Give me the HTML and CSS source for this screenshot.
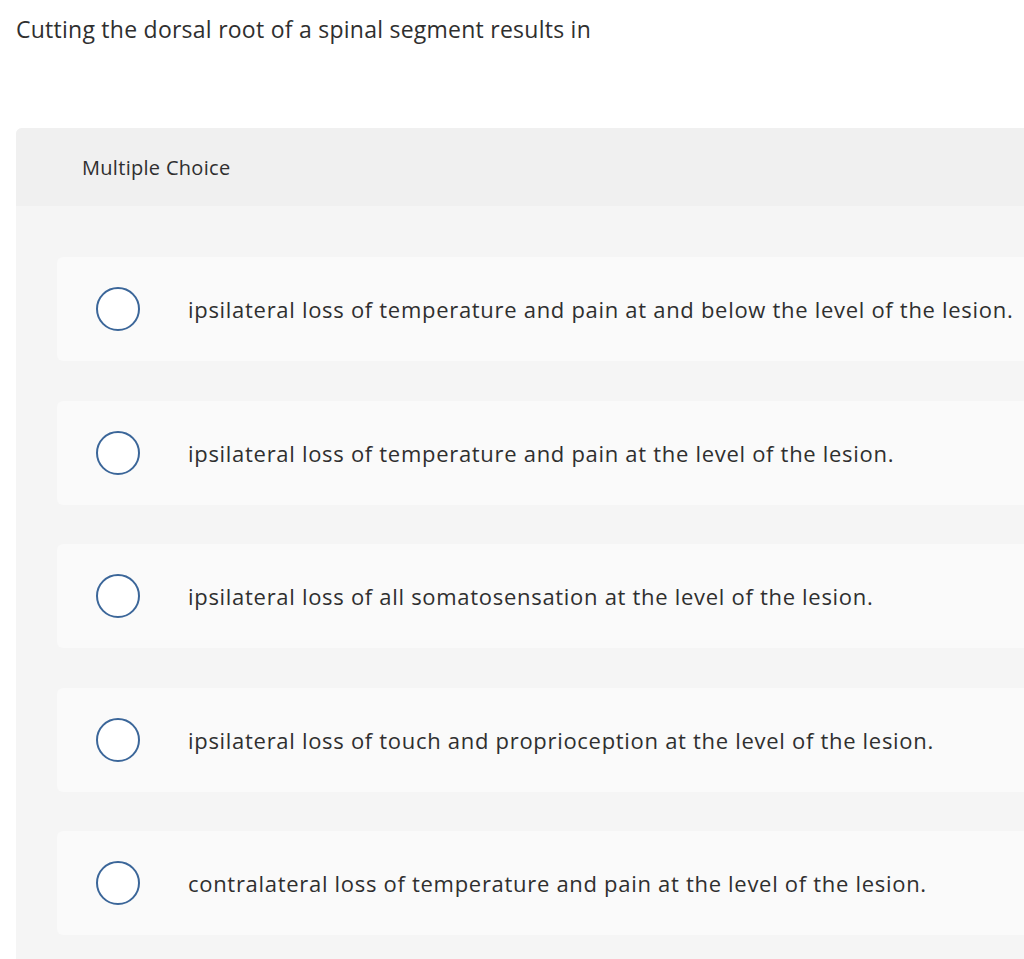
FILE: index.html
```html
<!DOCTYPE html>
<html>
<head>
<meta charset="utf-8">
<link rel="stylesheet" href="styles.css">
</head>
<body>
<div class="page">
  <h1 class="question">Cutting the dorsal root of a spinal segment results in</h1>
  <div class="panel">
    <div class="panel-head">Multiple Choice</div>
    <div class="panel-body">
      <div class="option"><span class="radio"></span><span class="label">ipsilateral loss of temperature and pain at and below the level of the lesion.</span></div>
      <div class="option"><span class="radio"></span><span class="label">ipsilateral loss of temperature and pain at the level of the lesion.</span></div>
      <div class="option"><span class="radio"></span><span class="label">ipsilateral loss of all somatosensation at the level of the lesion.</span></div>
      <div class="option"><span class="radio"></span><span class="label">ipsilateral loss of touch and proprioception at the level of the lesion.</span></div>
      <div class="option"><span class="radio"></span><span class="label">contralateral loss of temperature and pain at the level of the lesion.</span></div>
    </div>
  </div>
</div>
</body>
</html>
```
FILE: styles.css
```css
html, body {
  margin: 0;
  padding: 0;
  background: #ffffff;
  overflow: hidden;
}
.page {
  width: 1200px;
  padding: 0 0 0 16px;
  font-family: "Open Sans", "Liberation Sans", sans-serif;
  color: #333333;
}
.question {
  margin: 0;
  padding-top: 15px;
  height: 128px;
  box-sizing: border-box;
  font-size: 23px;
  font-weight: 400;
  letter-spacing: 0.25px;
  line-height: 28px;
  color: #2f2f2f;
}
.panel {
  width: 1150px;
  border-radius: 6px 0 0 0;
  background: #f5f5f5;
  overflow: hidden;
}
.panel-head {
  height: 78px;
  background: #f0f0f0;
  display: flex;
  align-items: center;
  padding-left: 66px;
  font-size: 20px;
  letter-spacing: 0.3px;
  color: #2f2f2f;
}
.panel-body {
  padding: 51px 0 40px 41px;
  display: flex;
  flex-direction: column;
  gap: 39.5px;
}
.option {
  height: 104px;
  background: #fafafa;
  border-radius: 6px 0 0 6px;
  display: flex;
  align-items: center;
  padding-left: 39px;
}
.radio {
  width: 40px;
  height: 40px;
  border: 2px solid #3b6699;
  border-radius: 50%;
  background: #ffffff;
  flex: none;
}
.label {
  margin-left: 48px;
  font-size: 22px;
  letter-spacing: 0.7px;
  color: #2f2f2f;
}
```
